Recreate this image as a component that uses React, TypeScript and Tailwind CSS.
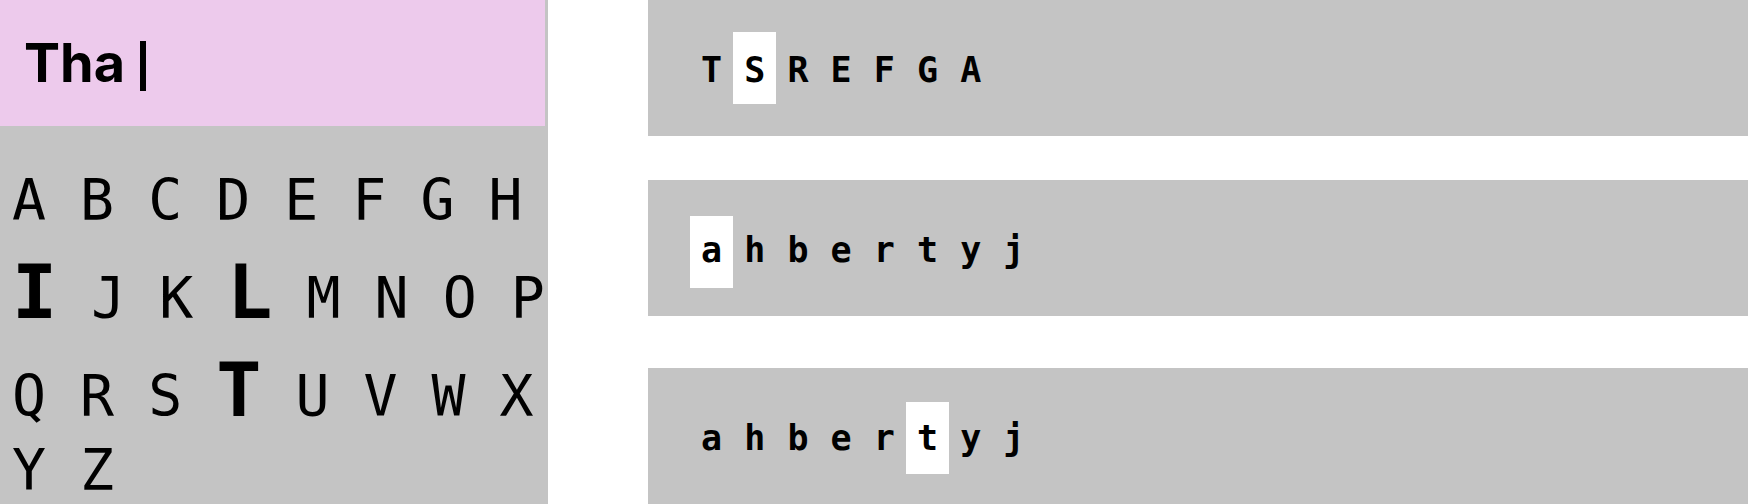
import { Fragment } from "react"

const mono = "font-['DejaVu_Sans_Mono','Liberation_Mono',monospace]"

// ── Alphabet tray (left) ──────────────────────────────────────────────────────
// I, L and T are the letters already picked: bigger and bold.
const alphabet = "ABCDEFGHIJKLMNOPQRSTUVWXYZ".split("")
const picked = new Set(["I", "L", "T"])

// ── Guess rows (right) ────────────────────────────────────────────────────────
// Highlight box sits a few px differently per row; leading keeps baseline at 82.
const rows = [
  { letters: "TSREFGA", active: 1, pad: "pt-[32px]", lead: "leading-[76.5px]" },
  { letters: "ahbertyj", active: 0, pad: "pt-[36px]", lead: "leading-[68.5px]" },
  { letters: "ahbertyj", active: 5, pad: "pt-[34px]", lead: "leading-[72.5px]" },
]

function Tray() {
  return (
    <aside className="w-[548px] shrink-0 h-full bg-[#c4c4c4] flex flex-col overflow-hidden">
      <div className="w-[545px] h-[126px] shrink-0 bg-[#edcaec] flex items-center pl-[24px]">
        <span className="font-['Inter',sans-serif] font-bold text-[54px] leading-none text-black">Tha</span>
        <span className="ml-[15px] mt-[6px] w-[6px] h-[50px] bg-black" />
      </div>
      <div className={`${mono} shrink-0 pt-[38px] pl-[12px] text-[56.5px] leading-[74px] text-black`}>
        {alphabet.map((l, i) => (
          <Fragment key={l}>
            {picked.has(l) ? (
              <span className="inline-block pt-[17px] text-[75px] leading-[75px] font-bold">{l}</span>
            ) : (
              l
            )}
            {i < alphabet.length - 1 ? " " : ""}
          </Fragment>
        ))}
      </div>
    </aside>
  )
}

function GuessRow({ letters, active, pad, lead }: (typeof rows)[number]) {
  return (
    <div className={`h-[136px] bg-[#c4c4c4] flex pl-[42px] ${pad}`}>
      {letters.split("").map((ch, i) => (
        <span
          key={i}
          className={`${mono} ${lead} w-[43.2px] h-[72px] shrink-0 text-center text-[35px] font-bold text-black ${
            i === active ? "bg-white" : ""
          }`}
        >
          {ch}
        </span>
      ))}
    </div>
  )
}

export default function App() {
  return (
    <div className="w-[1748px] h-[504px] flex bg-white overflow-hidden">
      <Tray />
      <main className="flex-1 pl-[100px] flex flex-col">
        <GuessRow {...rows[0]} />
        <div className="mt-[44px]">
          <GuessRow {...rows[1]} />
        </div>
        <div className="mt-[52px]">
          <GuessRow {...rows[2]} />
        </div>
      </main>
    </div>
  )
}
